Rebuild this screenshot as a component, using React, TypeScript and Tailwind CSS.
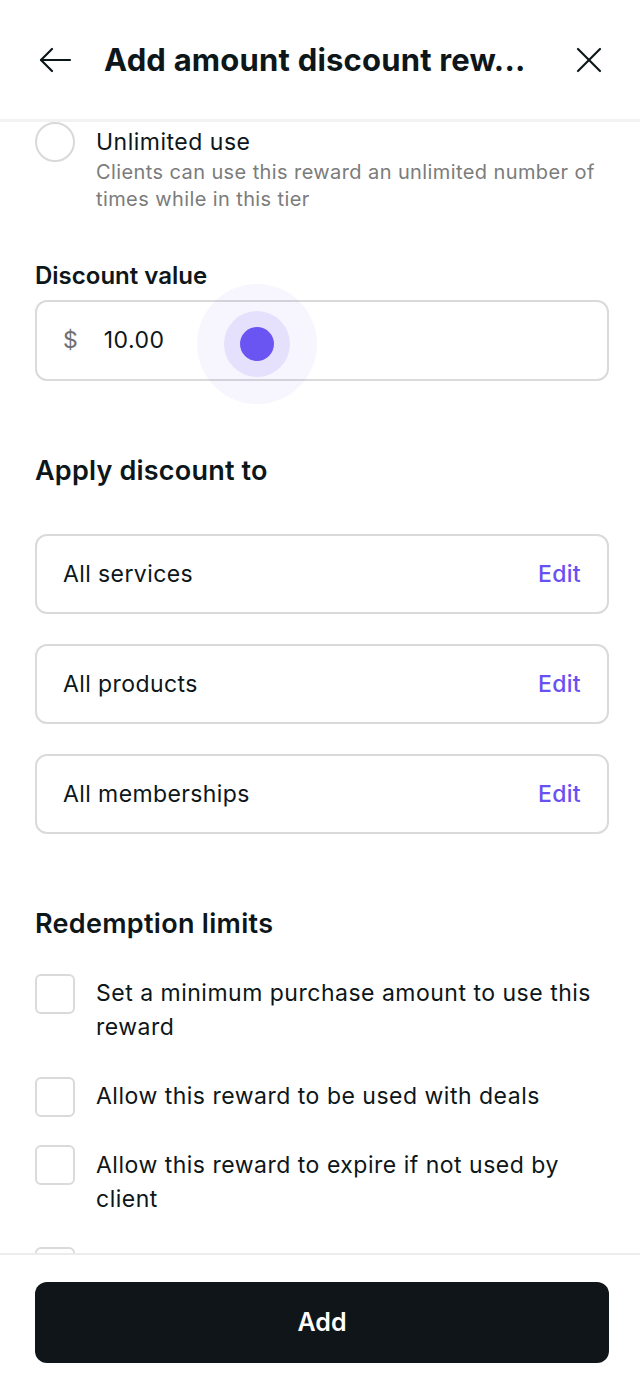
import React from "react";

// ── Static data ───────────────────────────────────────────────
const TARGETS = ["All services", "All products", "All memberships"];

const LIMITS = [
  { label: "Set a minimum purchase amount to use this reward", mt: "mt-0", textMt: "mt-[2px]" },
  { label: "Allow this reward to be used with deals", mt: "mt-[33px]", textMt: "mt-[2px]" },
  { label: "Allow this reward to expire if not used by client", mt: "mt-[28px]", textMt: "mt-[3px]" },
];

function BackArrow() {
  return (
    <svg width="34" height="28" viewBox="0 0 34 28" fill="none" stroke="#0d1619" strokeWidth="2.2" strokeLinecap="round" strokeLinejoin="round">
      <path d="M32 14H3" />
      <path d="M14 3L3 14l11 11" />
    </svg>
  );
}

function CloseIcon() {
  return (
    <svg width="26" height="26" viewBox="0 0 26 26" fill="none" stroke="#0d1619" strokeWidth="2.2" strokeLinecap="round">
      <path d="M2 2l22 22" />
      <path d="M24 2L2 24" />
    </svg>
  );
}

export default function App() {
  return (
    <div
      className="w-[640px] h-[1386px] flex flex-col overflow-hidden bg-white text-[#0d1619]"
      style={{ fontFamily: "Inter, 'Noto Sans', sans-serif" }}
    >
      {/* ── Header ── */}
      <header className="h-[122px] shrink-0 flex items-center pl-[38px] pr-[38px] border-b-[3px] border-[#f2f2f2]">
        <BackArrow />
        <h1 className="ml-[32px] text-[31px] leading-[36px] font-bold tracking-[0.2px] flex-1 whitespace-nowrap">
          Add amount discount rew...
        </h1>
        <CloseIcon />
      </header>

      {/* ── Scrolling body ── */}
      <main className="flex-1 overflow-hidden pl-[35px] pr-[31px]">
        {/* Unlimited use radio */}
        <div className="flex gap-[21px]">
          <span className="w-[40px] h-[40px] shrink-0 rounded-full border-[2px] border-[#d9d9d9]" />
          <div className="mt-[6px]">
            <div className="text-[23px] leading-[28px] tracking-[0.5px]">Unlimited use</div>
            <div className="mt-[3px] text-[20px] leading-[27px] tracking-[0.4px] text-[#7b7c7c]">
              Clients can use this reward an unlimited number of times while in this tier
            </div>
          </div>
        </div>

        {/* Discount value */}
        <h2 className="mt-[48px] text-[24px] leading-[30px] font-semibold">Discount value</h2>
        <div className="relative mt-[9px] h-[81px] rounded-[12px] border-[2px] border-[#dadada] flex items-center px-[26px]">
          <span className="text-[23px] text-[#6f7071]">$</span>
          <span className="ml-[26px] text-[23px] tracking-[0.5px]">10.00</span>
          {/* touch indicator */}
          <span className="absolute left-[160px] top-[-18px] w-[120px] h-[120px] rounded-full bg-[#6950f3]/[0.05] flex items-center justify-center">
            <span className="w-[66px] h-[66px] rounded-full bg-[#6950f3]/[0.13] flex items-center justify-center">
              <span className="w-[34px] h-[34px] rounded-full bg-[#6a55f2]" />
            </span>
          </span>
        </div>

        {/* Apply discount to */}
        <h2 className="mt-[74px] text-[27px] leading-[32px] font-semibold tracking-[0.2px]">Apply discount to</h2>
        <div className="mt-[47px] flex flex-col gap-[30px]">
          {TARGETS.map((t) => (
            <div key={t} className="h-[80px] rounded-[12px] border-[2px] border-[#dadada] flex items-center justify-between px-[26px]">
              <span className="text-[23px] tracking-[0.4px]">{t}</span>
              <span className="text-[23px] tracking-[0.3px] text-[#6950f3] font-medium">Edit</span>
            </div>
          ))}
        </div>

        {/* Redemption limits */}
        <h2 className="mt-[74px] text-[27px] leading-[32px] font-semibold tracking-[0.3px]">Redemption limits</h2>
        <div className="mt-[34px]">
          {LIMITS.map((l) => (
            <div key={l.label} className={`flex gap-[21px] ${l.mt}`}>
              <span className="w-[40px] h-[40px] shrink-0 rounded-[6px] border-[2px] border-[#dadada]" />
              <span className={`${l.textMt} text-[23px] leading-[34px] tracking-[0.5px]`}>{l.label}</span>
            </div>
          ))}
          <span className="block mt-[31px] w-[40px] h-[40px] rounded-[6px] border-[2px] border-[#dadada]" />
        </div>
      </main>

      {/* ── Footer ── */}
      <footer className="h-[133px] shrink-0 border-t-[2px] border-[#ececec] pl-[35px] pr-[31px] pt-[27px]">
        <button className="w-full h-[81px] rounded-[12px] bg-[#0f1519] text-white text-[25px] font-semibold">
          Add
        </button>
      </footer>
    </div>
  );
}
